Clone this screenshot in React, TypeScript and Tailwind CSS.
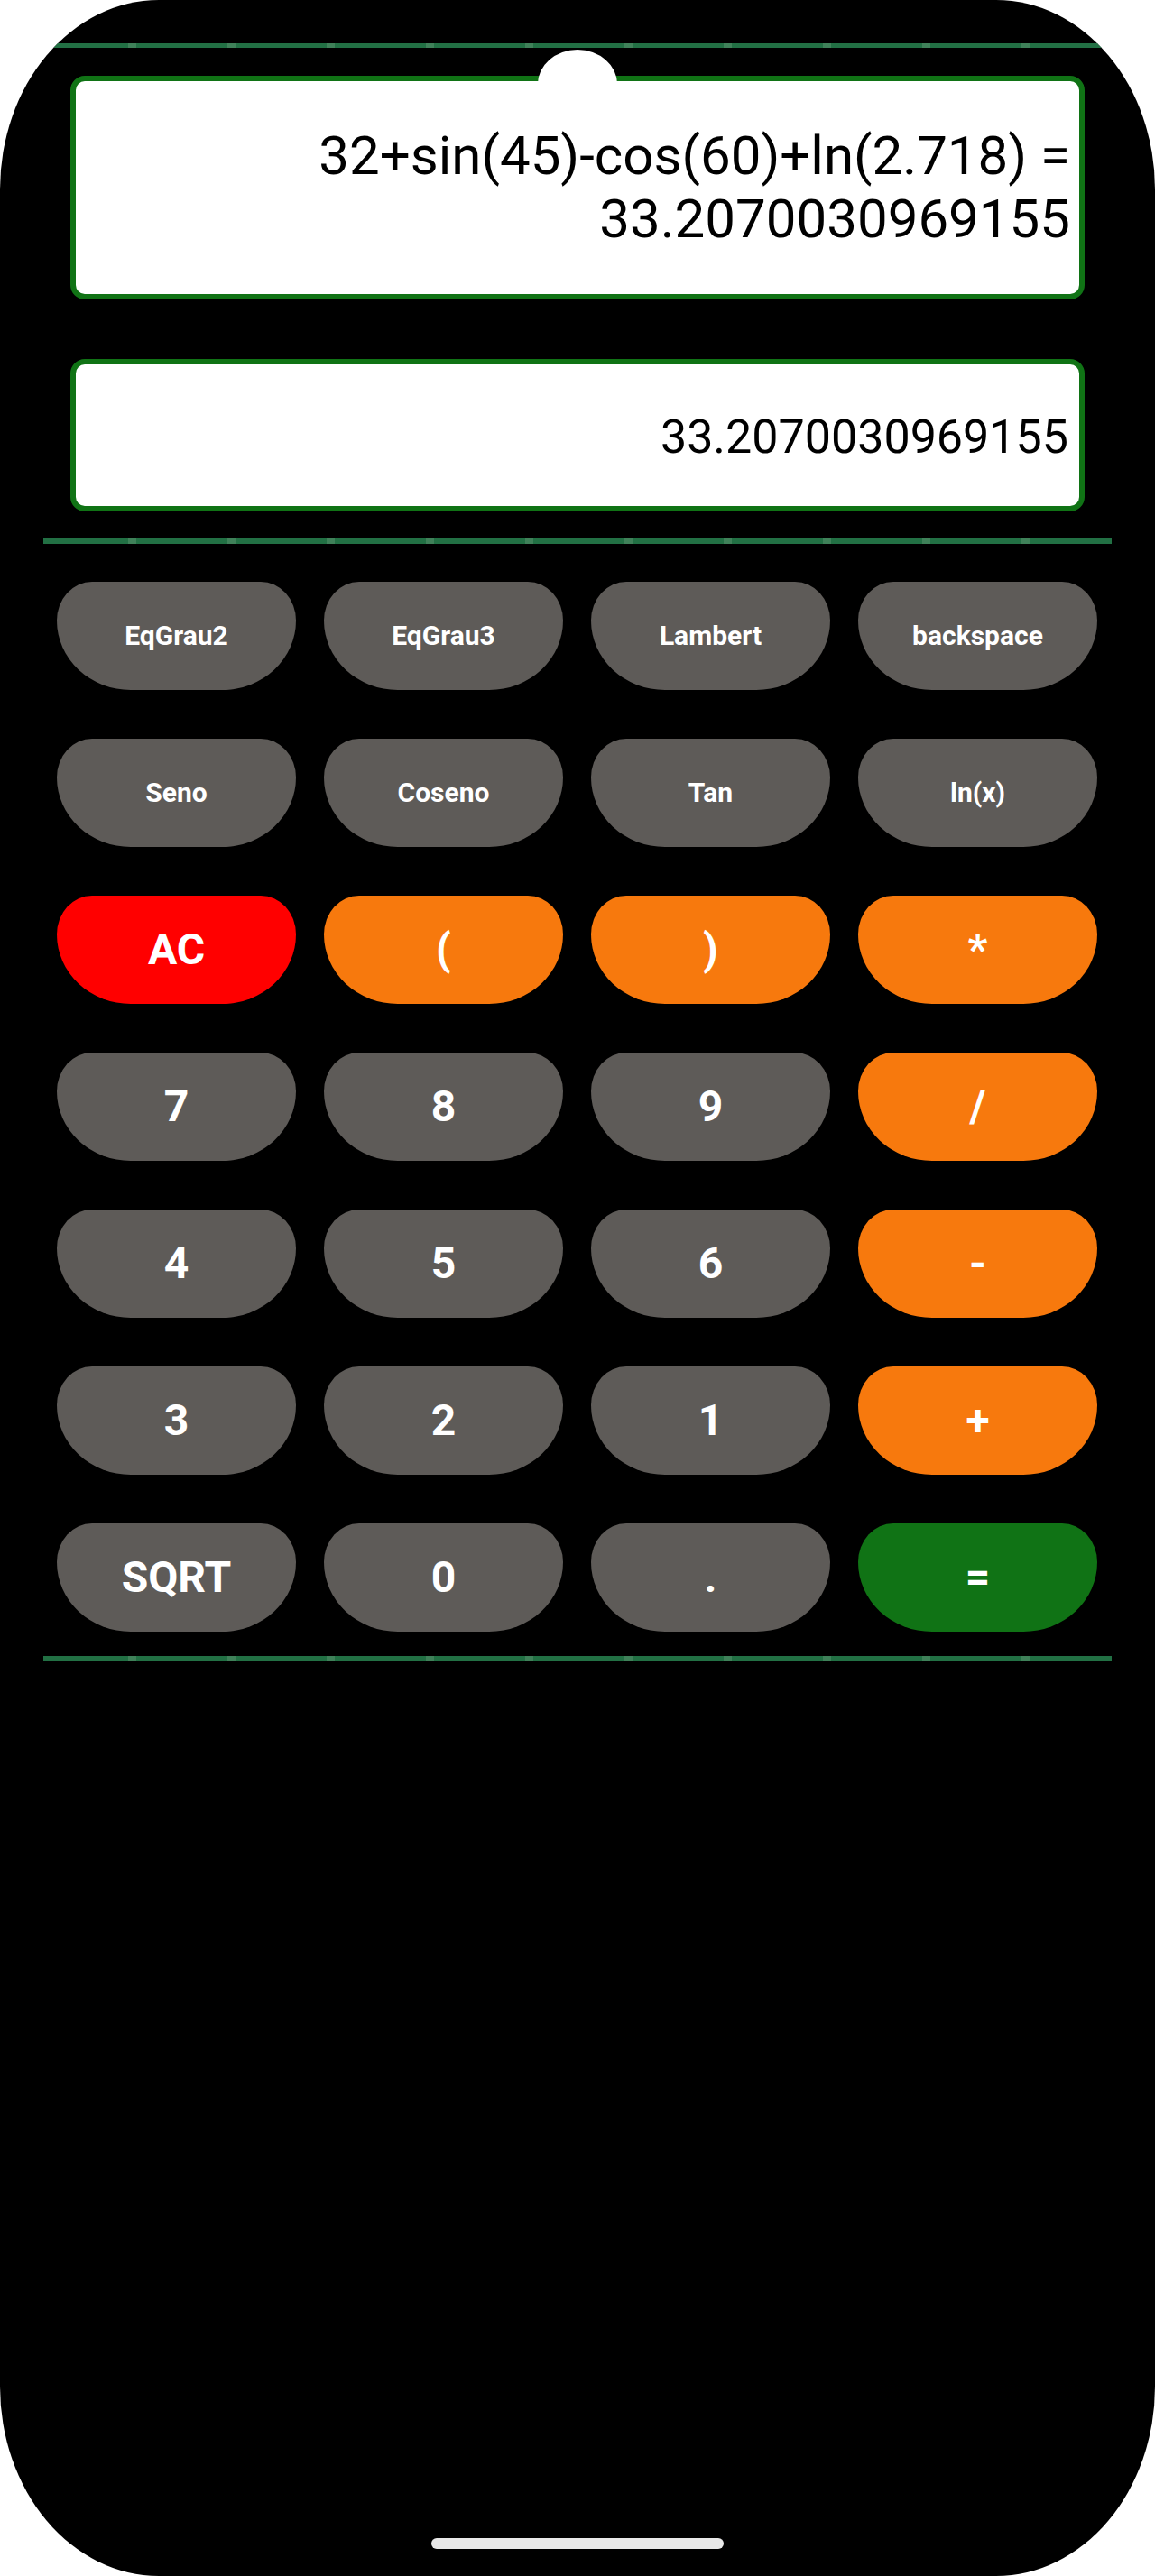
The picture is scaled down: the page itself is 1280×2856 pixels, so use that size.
import React from "react";

type Kind = "g" | "o" | "r" | "e";

const rows: [string, Kind, boolean][][] = [
  [
    ["EqGrau2", "g", true],
    ["EqGrau3", "g", true],
    ["Lambert", "g", true],
    ["backspace", "g", true],
  ],
  [
    ["Seno", "g", true],
    ["Coseno", "g", true],
    ["Tan", "g", true],
    ["ln(x)", "g", true],
  ],
  [
    ["AC", "r", false],
    ["(", "o", false],
    [")", "o", false],
    ["*", "o", false],
  ],
  [
    ["7", "g", false],
    ["8", "g", false],
    ["9", "g", false],
    ["/", "o", false],
  ],
  [
    ["4", "g", false],
    ["5", "g", false],
    ["6", "g", false],
    ["-", "o", false],
  ],
  [
    ["3", "g", false],
    ["2", "g", false],
    ["1", "g", false],
    ["+", "o", false],
  ],
  [
    ["SQRT", "g", false],
    ["0", "g", false],
    [".", "g", false],
    ["=", "e", false],
  ],
];

const bgFor: Record<Kind, string> = {
  g: "bg-[#5e5b58]",
  o: "bg-[#f7790d]",
  r: "bg-[#ff0000]",
  e: "bg-[#107315]",
};

function Key({ label, kind, small }: { label: string; kind: Kind; small: boolean }) {
  return (
    <button
      className={
        "h-[120px] flex items-center justify-center text-white font-bold leading-none rounded-[39px_39px_82px_82px/43px_43px_77px_77px] " +
        bgFor[kind] +
        " " +
        (small ? "text-[30px]" : "text-[48px]")
      }
    >
      {label}
    </button>
  );
}

function Line({ className }: { className: string }) {
  return (
    <div
      className={
        "mx-[48px] bg-[repeating-linear-gradient(90deg,#227044_0px,#227044_94px,#3f8159_94px,#3f8159_103px,#227044_103px,#227044_110px)] " +
        className
      }
    />
  );
}

export default function App() {
  return (
    <div className="w-[1280px] h-[2856px] bg-white font-['Roboto',sans-serif]">
      <div className="relative w-full h-full bg-black rounded-[176px/210px] overflow-hidden flex flex-col">
        <Line className="mt-[48px] h-[5px]" />

        <div className="mt-[31px] mx-[78px] h-[248px] border-[6px] border-[#107315] rounded-[16px] bg-white flex flex-col justify-center items-end pr-[10px] text-black text-[60px] leading-[70px]">
          <span className="block">32+sin(45)-cos(60)+ln(2.718) =</span>
          <span className="block">33.2070030969155</span>
        </div>

        <div className="absolute top-[55px] left-[596px] w-[88px] h-[45px] bg-white rounded-t-[44px_38px]" />

        <div className="mt-[66px] mx-[78px] h-[169px] border-[6px] border-[#107315] rounded-[16px] bg-white flex items-center justify-end pr-[12px] text-black text-[52px] leading-none">
          <span className="pt-[4px]">33.2070030969155</span>
        </div>

        <Line className="mt-[30px] h-[6px]" />

        <div className="mt-[42px] ml-[63px] mr-[64px] grid grid-cols-4 gap-x-[31px] gap-y-[54px]">
          {rows.map((row, i) =>
            row.map(([label, kind, small], j) => (
              <Key key={i + "-" + j} label={label} kind={kind} small={small} />
            ))
          )}
        </div>

        <Line className="mt-[27px] h-[6px]" />

        <div className="mt-auto mb-[30px] self-center w-[324px] h-[12px] rounded-full bg-[#e8e8e8]" />
      </div>
    </div>
  );
}
